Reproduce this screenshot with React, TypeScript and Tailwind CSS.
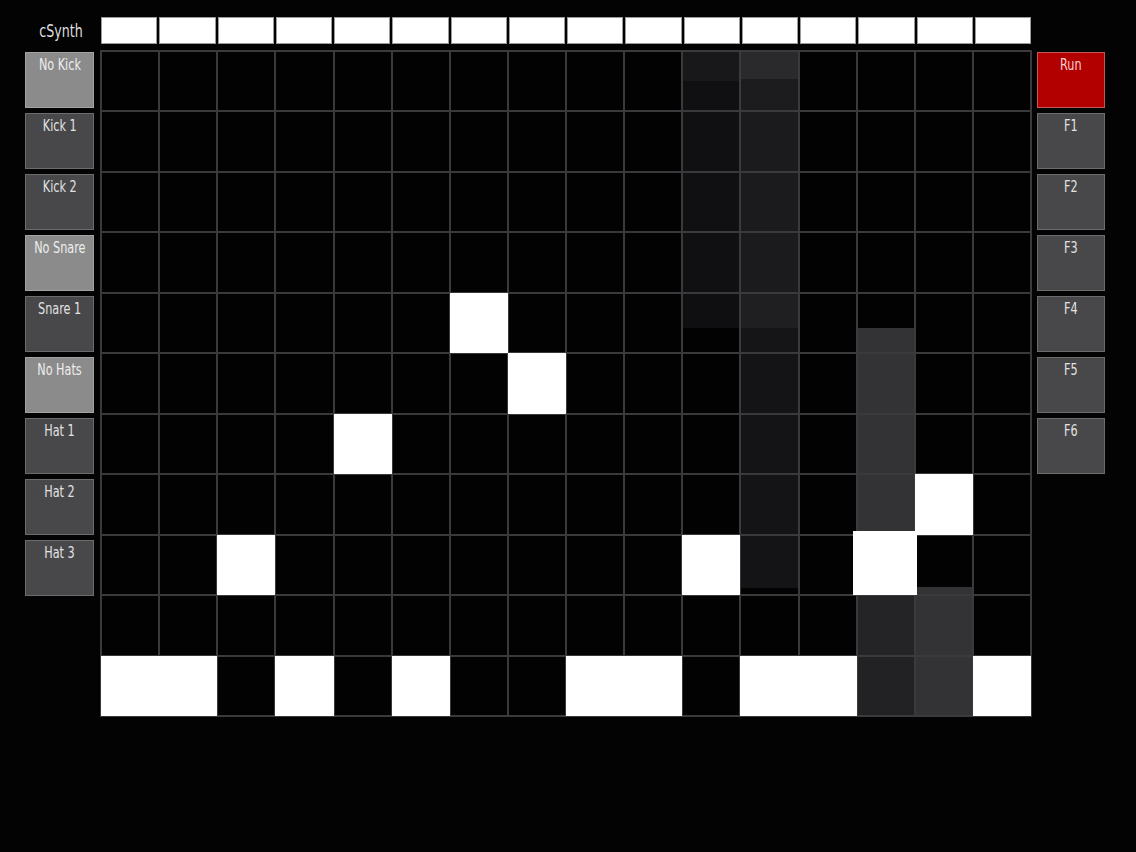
import React from "react";

const FONT = "[font-family:'DejaVu_Sans_Condensed','Liberation_Sans',sans-serif]";

const leftButtons: { label: string; light: boolean }[] = [
  { label: "No Kick", light: true },
  { label: "Kick 1", light: false },
  { label: "Kick 2", light: false },
  { label: "No Snare", light: true },
  { label: "Snare 1", light: false },
  { label: "No Hats", light: true },
  { label: "Hat 1", light: false },
  { label: "Hat 2", light: false },
  { label: "Hat 3", light: false },
];

const rightButtons = ["F1", "F2", "F3", "F4", "F5", "F6"];

const whites = new Set([
  "4-6",
  "5-7",
  "6-4",
  "7-14",
  "8-2",
  "8-10",
  "10-0",
  "10-1",
  "10-3",
  "10-5",
  "10-8",
  "10-9",
  "10-11",
  "10-12",
  "10-15",
]);

const shade: Record<string, string> = {
  "0-10": "bg-[linear-gradient(to_bottom,#18181a_50%,#101012_50%)]",
  "1-10": "bg-[#101012]",
  "2-10": "bg-[#101012]",
  "3-10": "bg-[#101012]",
  "4-10": "bg-[linear-gradient(to_bottom,#0f0f11_58%,#020202_58%)]",
  "0-11": "bg-[linear-gradient(to_bottom,#2a2a2c_46%,#1c1c1e_46%)]",
  "1-11": "bg-[#1b1b1d]",
  "2-11": "bg-[#1b1b1d]",
  "3-11": "bg-[#1b1b1d]",
  "4-11": "bg-[linear-gradient(to_bottom,#1f1f21_58%,#151517_58%)]",
  "5-11": "bg-[#141416]",
  "6-11": "bg-[#141416]",
  "7-11": "bg-[#141416]",
  "8-11": "bg-[linear-gradient(to_bottom,#141416_90%,#020202_90%)]",
  "4-13": "bg-[linear-gradient(to_bottom,#020202_58%,#333335_58%)]",
  "5-13": "bg-[#333335]",
  "6-13": "bg-[#333335]",
  "7-13": "bg-[#333335]",
  "9-13": "bg-[#242426]",
  "10-13": "bg-[#222224]",
  "8-14": "bg-[linear-gradient(to_bottom,#020202_88%,#333335_88%)]",
  "9-14": "bg-[#333335]",
  "10-14": "bg-[#333335]",
};

function Cell({ r, c }: { r: number; c: number }) {
  const key = `${r}-${c}`;
  if (key === "8-13") {
    return <div className="relative z-10 bg-white -ml-[5px] -mr-[3px] -mt-[5px] -mb-[1px]" />;
  }
  if (whites.has(key)) {
    return <div className="relative z-10 bg-white -m-[1px]" />;
  }
  return <div className={shade[key] ?? "bg-[#020202]"} />;
}

function Btn({ label, cls }: { label: string; cls: string }) {
  return (
    <div className={`h-[56px] border text-center text-[16px] leading-[19px] pt-[2px] ${cls}`}>
      <span className="inline-block scale-x-[0.78] whitespace-nowrap">{label}</span>
    </div>
  );
}

export default function App() {
  const rows = Array.from({ length: 11 }, (_, i) => i);
  const cols = Array.from({ length: 16 }, (_, i) => i);
  return (
    <div className={`w-[1136px] h-[852px] bg-[#030303] pt-[17px] ${FONT}`}>
      {/* header */}
      <div className="flex h-[27px]">
        <div className="w-[100px] pr-[17px] flex items-center justify-end text-[18px] text-[#dedede] leading-none">
          <span className="inline-block scale-x-[0.78] origin-right">cSynth</span>
        </div>
        <div className="w-[932px] grid grid-cols-16 gap-[2px] px-[1px]">
          {cols.map((c) => (
            <div key={c} className="bg-white border border-[#9a9a9a]" />
          ))}
        </div>
      </div>

      {/* main */}
      <div className="flex mt-[6px]">
        <div className="ml-[25px] mr-[6px] w-[69px] flex flex-col gap-[5px] pt-[2px]">
          {leftButtons.map((b) => (
            <Btn
              key={b.label}
              label={b.label}
              cls={
                b.light
                  ? "bg-[#8b8b8b] border-[#a3a3a3] text-[#eeeeee]"
                  : "bg-[#48484a] border-[#6c6c6e] text-[#e2e2e2]"
              }
            />
          ))}
        </div>

        <div className="w-[932px] h-[667px] bg-[#3a3a3c] p-[2px] grid grid-cols-16 grid-rows-11 gap-[2px]">
          {rows.map((r) => cols.map((c) => <Cell key={`${r}-${c}`} r={r} c={c} />))}
        </div>

        <div className="ml-[5px] w-[68px] flex flex-col gap-[5px] pt-[2px]">
          <Btn label="Run" cls="bg-[#b20000] border-[#c65555] text-[#f4d0d0]" />
          {rightButtons.map((l) => (
            <Btn key={l} label={l} cls="bg-[#48484a] border-[#6c6c6e] text-[#e2e2e2]" />
          ))}
        </div>
      </div>
    </div>
  );
}
